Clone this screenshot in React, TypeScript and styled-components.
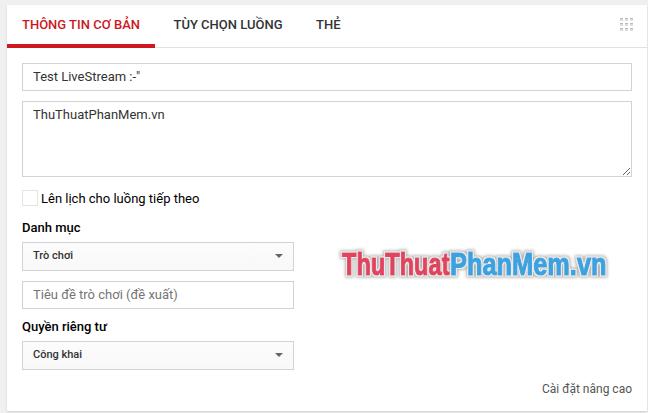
import React, { useState } from 'react';
import styled, { createGlobalStyle, css } from 'styled-components';

const GlobalStyle = createGlobalStyle`
  * {
    box-sizing: border-box;
  }

  body {
    margin: 0;
    background: #f0f0f0;
    font-family: Roboto, 'Noto Sans', sans-serif;
    font-size: 13px;
    color: #000;
    overflow: hidden;
  }
`;

const Page = styled.div`
  height: 413px;
  padding: 5px 1px 2px 7px;
`;

const Card = styled.div`
  position: relative;
  height: 406px;
  background: #fff;
  box-shadow: 0 1px 2px rgba(0, 0, 0, 0.15);
`;

const TabBar = styled.div`
  display: flex;
  height: 43px;
  border-bottom: 1px solid #e2e2e2;
`;

const Tab = styled.button<{ $active: boolean }>`
  height: 43px;
  padding: 0 15px;
  margin-right: 3.5px;
  border: none;
  border-bottom: 4px solid ${(props) => (props.$active ? '#cc181e' : 'transparent')};
  background: none;
  color: ${(props) => (props.$active ? '#cc181e' : '#333')};
  font: 500 13px Roboto, sans-serif;
  white-space: nowrap;
  cursor: pointer;
`;

const GridButton = styled.button`
  display: flex;
  margin: 13px 14px 0 auto;
  padding: 0;
  height: 13px;
  border: none;
  background: none;
`;

const Form = styled.div`
  display: flex;
  flex-direction: column;
  align-items: flex-start;
  padding: 15px 15px 0;
`;

const fieldStyle = css`
  display: block;
  margin: 0 0 10px;
  border: 1px solid #d3d3d3;
  border-radius: 0;
  outline: none;
  background: #fff;
  box-shadow: inset 0 0 1px rgba(0, 0, 0, 0.05);
  color: #333;
  font: 400 13px Roboto, sans-serif;

  &::placeholder {
    color: #757575;
  }
`;

const Input = styled.input<{ $width: number }>`
  ${fieldStyle}
  width: ${(props) => props.$width}px;
  height: 28px;
  padding: 0 10px 2px;
`;

const TextArea = styled.textarea`
  ${fieldStyle}
  width: 610px;
  height: 76px;
  padding: 5px 10px;
`;

const CheckRow = styled.label`
  display: flex;
  align-items: center;
  height: 16px;
  margin: 3px 0 14px;
  gap: 3px;
  white-space: nowrap;
`;

const CheckBox = styled.input`
  appearance: none;
  width: 16px;
  height: 16px;
  margin: 0;
  border: 1px solid #e3e3e3;
  background: #fff;

  &:checked {
    background: #cc181e;
  }
`;

const Label = styled.div`
  height: 15px;
  margin-bottom: 7px;
  font-weight: 500;
  line-height: 15px;
`;

const Select = styled.button`
  display: flex;
  align-items: center;
  justify-content: space-between;
  width: 272px;
  height: 29px;
  margin-bottom: 10px;
  padding: 0 10px 2px;
  border: 1px solid #d3d3d3;
  background: linear-gradient(#fcfcfc, #f8f8f8);
  color: #333;
  font: 500 11px Roboto, sans-serif;
`;

const Arrow = styled.span`
  margin-top: 1px;
  border: 4px solid transparent;
  border-top-color: #666;
  border-bottom: none;
`;

const AdvancedLink = styled.a`
  align-self: flex-end;
  margin-top: 2px;
  color: #555;
  font-size: 12px;
  line-height: 15px;
`;

const Watermark = styled.svg`
  position: absolute;
  left: 323px;
  top: 235px;
  overflow: visible;
  pointer-events: none;
`;

const tabs = ['THÔNG TIN CƠ BẢN', 'TÙY CHỌN LUỒNG', 'THẺ'];

const GridIcon = () => (
  <svg width="13" height="13" shapeRendering="crispEdges">
    {[0, 5, 10].map((y) =>
      [0, 5, 10].map((x) => (
        <g key={`${x}-${y}`}>
          <rect x={x} y={y} width="3" height="3" fill="#ddd" />
          <rect x={x} y={y} width="3" height="1" fill="#bbb" />
        </g>
      ))
    )}
  </svg>
);

const App: React.FC = () => {
  const [activeTab, setActiveTab] = useState(0);
  const [title, setTitle] = useState('Test LiveStream :-"');
  const [description, setDescription] = useState('ThuThuatPhanMem.vn');
  const [game, setGame] = useState('');

  return (
    <Page>
      <GlobalStyle />
      <Card>
        <TabBar>
          {tabs.map((tab, index) => (
            <Tab key={tab} $active={index === activeTab} onClick={() => setActiveTab(index)}>
              {tab}
            </Tab>
          ))}
          <GridButton>
            <GridIcon />
          </GridButton>
        </TabBar>
        <Form>
          <Input $width={610} value={title} onChange={(e) => setTitle(e.target.value)} />
          <TextArea
            value={description}
            spellCheck={false}
            onChange={(e) => setDescription(e.target.value)}
          />
          <CheckRow>
            <CheckBox type="checkbox" />
            Lên lịch cho luồng tiếp theo
          </CheckRow>
          <Label>Danh mục</Label>
          <Select>
            Trò chơi
            <Arrow />
          </Select>
          <Input
            $width={272}
            value={game}
            placeholder="Tiêu đề trò chơi (đề xuất)"
            onChange={(e) => setGame(e.target.value)}
          />
          <Label>Quyền riêng tư</Label>
          <Select>
            Công khai
            <Arrow />
          </Select>
          <AdvancedLink>Cài đặt nâng cao</AdvancedLink>
        </Form>
        <Watermark width="290" height="50">
          <defs>
            {/* light ring around the letters with a soft grey halo behind it */}
            <filter id="outline" filterUnits="userSpaceOnUse" x="0" y="0" width="290" height="50">
              <feMorphology in="SourceAlpha" operator="dilate" radius="2" result="wide" />
              <feGaussianBlur in="wide" stdDeviation="1.8" result="soft" />
              <feFlood floodColor="#808080" floodOpacity="0.6" />
              <feComposite in2="soft" operator="in" result="halo" />
              <feMorphology in="SourceAlpha" operator="dilate" radius="1" result="near" />
              <feFlood floodColor="#ececec" />
              <feComposite in2="near" operator="in" result="ring" />
              <feMerge>
                <feMergeNode in="halo" />
                <feMergeNode in="ring" />
                <feMergeNode in="SourceGraphic" />
              </feMerge>
            </filter>
          </defs>
          <g
            fontFamily="'Liberation Sans Narrow', 'Liberation Sans', sans-serif"
            fontSize="32"
            fontWeight="700"
            strokeWidth="1.2"
            filter="url(#outline)"
          >
            <text x="12" y="35" textLength="107.5" lengthAdjust="spacingAndGlyphs" fill="#e0435f" stroke="#e0435f">
              ThuThuat
            </text>
            <text x="120" y="35" textLength="156.5" lengthAdjust="spacingAndGlyphs" fill="#39a3e0" stroke="#39a3e0">
              PhanMem.vn
            </text>
          </g>
        </Watermark>
      </Card>
    </Page>
  );
};

export default App;
